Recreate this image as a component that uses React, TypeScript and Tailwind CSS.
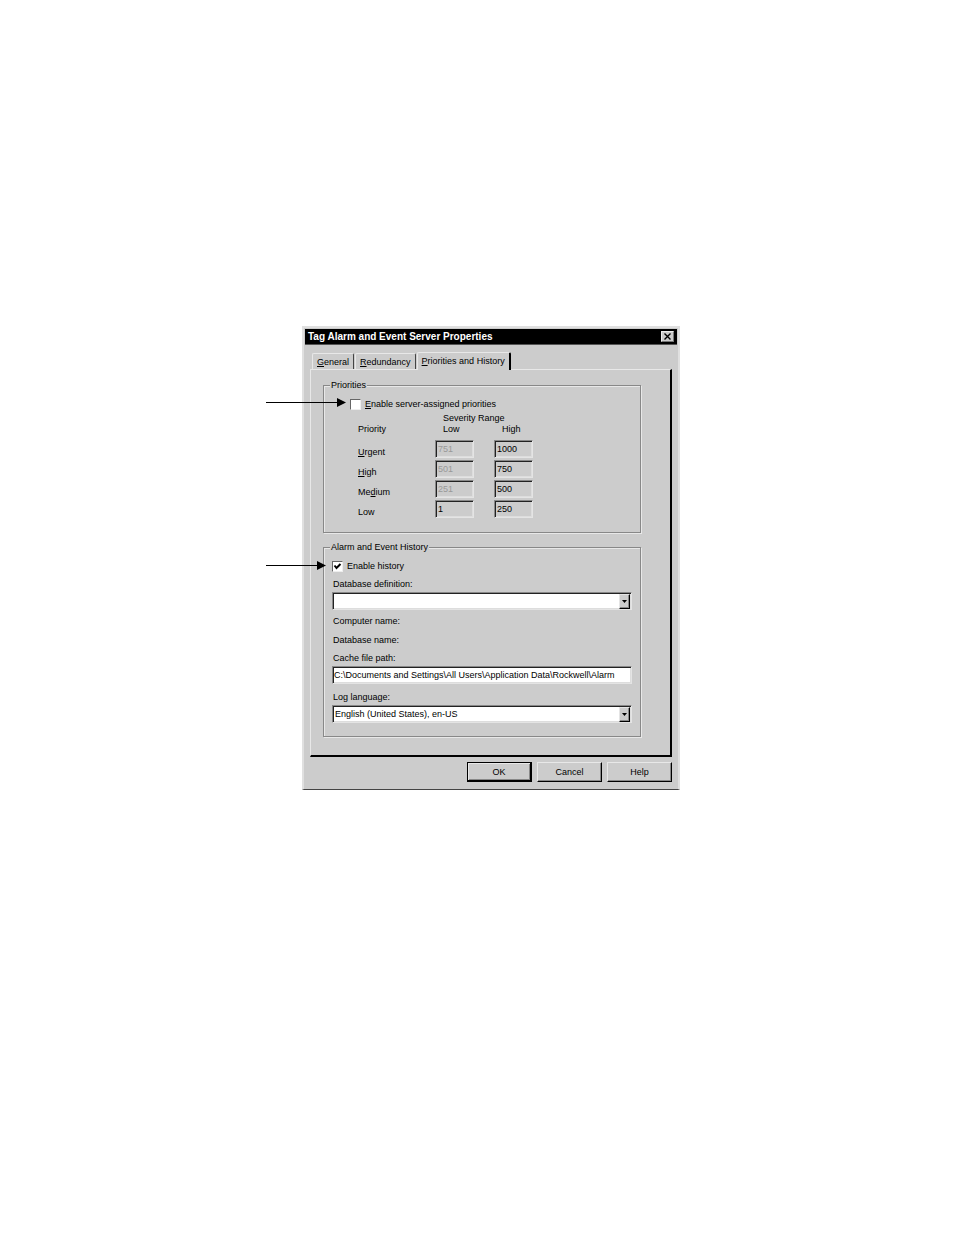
import { useState } from 'react'
import type { ReactNode } from 'react'

const severities = [
  { id: 'urgent', label: <><u>U</u>rgent</>, low: '751', high: '1000', locked: true },
  { id: 'high', label: <><u>H</u>igh</>, low: '501', high: '750', locked: true },
  { id: 'medium', label: <>Me<u>d</u>ium</>, low: '251', high: '500', locked: true },
  { id: 'low', label: <>Low</>, low: '1', high: '250', locked: false },
]

const sunken =
  'border border-t-[#888] border-l-[#888] border-r-[#e4e4e4] border-b-[#e4e4e4] shadow-[inset_1px_1px_0_#222,inset_-1px_-1px_0_#ddd] outline-none'

function Arrow({ className }: { className: string }) {
  return (
    <div className={`flex items-center pointer-events-none ${className}`} aria-hidden="true">
      <div className="grow h-px bg-black" />
      <svg width="9" height="9" viewBox="0 0 9 9">
        <path d="M0 0L9 4.5L0 9Z" fill="#000" />
      </svg>
    </div>
  )
}

function Check({ label, defaultChecked }: { label: ReactNode; defaultChecked?: boolean }) {
  return (
    <label className="flex items-center gap-1 h-3">
      <span className="relative flex">
        <input
          type="checkbox"
          defaultChecked={defaultChecked}
          className="peer appearance-none size-[11px] bg-white border border-t-[#666] border-l-[#666] border-r-[#eee] border-b-[#eee]"
        />
        <svg
          viewBox="0 0 11 11"
          className="absolute inset-0 size-[11px] pointer-events-none hidden peer-checked:block"
        >
          <path d="M2.5 4.5L4.5 7L8.5 3" fill="none" stroke="#000" strokeWidth="2" />
        </svg>
      </span>
      <span>{label}</span>
    </label>
  )
}

function Select({ id, options }: { id: string; options: string[] }) {
  return (
    <div className="relative flex">
      <select id={id} className={`appearance-none w-full h-[18px] bg-white px-0.5 ${sunken}`}>
        {options.map((o) => (
          <option key={o}>{o}</option>
        ))}
      </select>
      <span className="absolute right-0.5 top-0.5 bottom-px w-[11px] flex items-center justify-center pointer-events-none bg-[#ccc] border border-t-[#e4e4e4] border-l-[#e4e4e4] border-r-black border-b-black shadow-[inset_-1px_-1px_0_#888]">
        <svg width="5" height="3" viewBox="0 0 5 3">
          <path d="M0 0H5L2.5 3Z" fill="#000" />
        </svg>
      </span>
    </div>
  )
}

function Group({ title, className, children }: { title: string; className: string; children: ReactNode }) {
  return (
    <fieldset className={`border border-[#888] shadow-[1px_1px_0_#e8e8e8,inset_1px_1px_0_#e8e8e8] ${className}`}>
      <legend className="relative px-px h-3 leading-3 bg-[#ccc]">{title}</legend>
      {children}
    </fieldset>
  )
}

export default function App() {
  const [tab, setTab] = useState(2)
  const tabs = [
    <><u>G</u>eneral</>,
    <><u>R</u>edundancy</>,
    <><u>P</u>riorities and History</>,
  ]

  return (
    <main className="min-h-screen bg-white flex items-start justify-center pt-[326px] pb-8 pr-2 text-black text-[9px] leading-3 font-['Liberation_Sans',Arial,sans-serif]">
      <div className="relative w-full max-w-[414px] pl-9">

        <section className="bg-[#ccc] border-2 border-[#e0e0e0] border-b border-b-[#444] px-px pt-px pb-[7px]">
          <header className="flex items-center justify-between h-4 bg-black border-b border-[#555] px-[3px]">
            <h1 className="text-white font-bold text-[10px]">
              Tag Alarm and Event Server Properties
            </h1>
            <button
              aria-label="Close"
              className="flex items-center justify-center w-[13px] h-[11px] bg-[#ccc] border border-t-[#eee] border-l-[#eee] border-r-[#777] border-b-[#777]"
            >
              <svg width="7" height="7" viewBox="0 0 7 7">
                <path d="M0.5 0.5L6.5 6.5M6.5 0.5L0.5 6.5" stroke="#000" strokeWidth="1.4" />
              </svg>
            </button>
          </header>

          <div className="px-[5px] pt-[7px]">
            <div role="tablist" className="flex items-end gap-px pl-0.5">
              {tabs.map((t, i) => (
                <button
                  key={i}
                  role="tab"
                  aria-selected={tab === i}
                  onClick={() => setTab(i)}
                  className={
                    tab === i
                      ? 'relative h-[18px] px-1 pb-0.5 -mb-px rounded-t-xs bg-[#ccc] border-t border-l border-r-2 border-t-[#e8e8e8] border-l-[#e8e8e8] border-r-black'
                      : 'h-4 px-1 rounded-t-xs border-t border-l border-r border-t-[#e8e8e8] border-l-[#e8e8e8] border-r-[#444]'
                  }
                >
                  {t}
                </button>
              ))}
            </div>

            <div className="border-t border-l border-r-2 border-b-2 border-t-[#e8e8e8] border-l-[#e8e8e8] border-r-black border-b-black pl-3 pr-[29px] pt-[9px] pb-[18px]">
              <Group title="Priorities" className="px-[6px] pb-[14px]">
                <div className="pl-5 pt-[7px]">
                  <Check label={<><u>E</u>nable server-assigned priorities</>} />
                </div>
                <table className="ml-7 mt-[3px] text-left">
                  <thead className="leading-[11px]">
                    <tr>
                      <td />
                      <th colSpan={2} className="p-0 pl-2 font-normal">Severity Range</th>
                    </tr>
                    <tr>
                      <th className="p-0 pb-[3px] w-[77px] font-normal">Priority</th>
                      <th className="p-0 pb-[3px] pl-2 w-[59px] font-normal">Low</th>
                      <th className="p-0 pb-[3px] pl-2 w-[39px] font-normal">High</th>
                    </tr>
                  </thead>
                  <tbody>
                    {severities.map((s) => (
                      <tr key={s.id} className="h-5 align-bottom">
                        <th className="p-0 font-normal">
                          <label htmlFor={`${s.id}-low`}>{s.label}</label>
                        </th>
                        <td className="p-0">
                          <input
                            id={`${s.id}-low`}
                            defaultValue={s.low}
                            disabled={s.locked}
                            className={`block w-[39px] h-[18px] bg-[#ccc] pl-0.5 disabled:text-[#999] ${sunken}`}
                          />
                        </td>
                        <td className="p-0">
                          <input
                            aria-label={`${s.id} high`}
                            defaultValue={s.high}
                            className={`block w-[39px] h-[18px] bg-[#ccc] pl-0.5 ${sunken}`}
                          />
                        </td>
                      </tr>
                    ))}
                  </tbody>
                </table>
              </Group>

              <Group title="Alarm and Event History" className="mt-2 px-[6px] pb-[13px]">
                <div className="px-0.5">
                  <div className="pt-[7px]">
                    <Check label="Enable history" defaultChecked />
                  </div>
                  <label htmlFor="definition" className="block mt-[6px] pl-px">Database definition:</label>
                  <div className="mt-0.5">
                    <Select id="definition" options={['']} />
                  </div>
                  <p className="mt-[5px] pl-px">Computer name:</p>
                  <p className="mt-[7px] pl-px">Database name:</p>
                  <label htmlFor="cache" className="block mt-[6px] pl-px">Cache file path:</label>
                  <input
                    id="cache"
                    defaultValue="C:\Documents and Settings\All Users\Application Data\Rockwell\Alarm"
                    className={`block w-full h-[18px] mt-0.5 pl-px bg-white ${sunken}`}
                  />
                  <label htmlFor="language" className="block mt-[7px] pl-px">Log language:</label>
                  <div className="mt-0.5">
                    <Select id="language" options={['English (United States), en-US']} />
                  </div>
                </div>
              </Group>
            </div>

            <footer className="flex justify-end gap-[5px] mt-[5px]">
              <button className="w-[65px] h-5 border border-r-2 border-b-2 border-black shadow-[inset_1px_1px_0_#e8e8e8,inset_-1px_-1px_0_#888]">
                OK
              </button>
              {['Cancel', 'Help'].map((name) => (
                <button
                  key={name}
                  className="w-[65px] h-5 border border-t-[#e8e8e8] border-l-[#e8e8e8] border-r-black border-b-black shadow-[inset_-1px_-1px_0_#888]"
                >
                  {name}
                </button>
              ))}
            </footer>
          </div>
        </section>

        <Arrow className="absolute left-0 top-[72px] w-20" />
        <Arrow className="absolute left-0 top-[235px] w-[60px]" />
      </div>
    </main>
  )
}
